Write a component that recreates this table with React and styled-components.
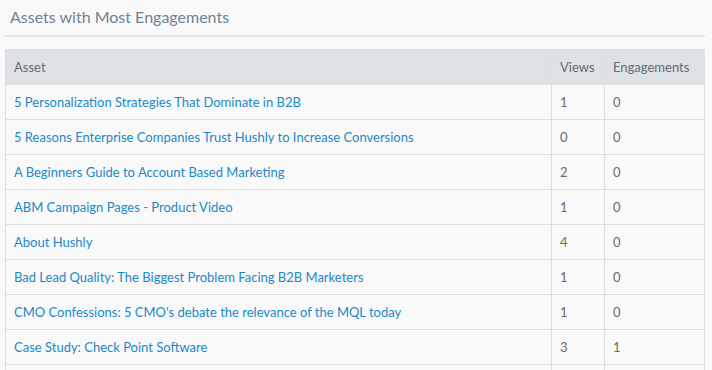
import React from 'react'
import styled, { createGlobalStyle } from 'styled-components'

const GlobalStyle = createGlobalStyle`
  body {
    margin: 0;
    background: #f9f9f9;
    font-family: Lato, 'Open Sans', sans-serif;
  }
`

const assets = [
  { name: '5 Personalization Strategies That Dominate in B2B', views: 1, engagements: 0 },
  { name: '5 Reasons Enterprise Companies Trust Hushly to Increase Conversions', views: 0, engagements: 0 },
  { name: 'A Beginners Guide to Account Based Marketing', views: 2, engagements: 0 },
  { name: 'ABM Campaign Pages - Product Video', views: 1, engagements: 0 },
  { name: 'About Hushly', views: 4, engagements: 0 },
  { name: 'Bad Lead Quality: The Biggest Problem Facing B2B Marketers', views: 1, engagements: 0 },
  { name: "CMO Confessions: 5 CMO's debate the relevance of the MQL today", views: 1, engagements: 0 },
  { name: 'Case Study: Check Point Software', views: 3, engagements: 1 },
  { name: 'Content Experience Platform', views: 2, engagements: 0 },
]

const Panel = styled.section`
  padding: 4px 7px 0 5px;
  height: 370px;
  box-sizing: border-box;
  overflow: hidden;
`

const Title = styled.h3`
  margin: 0 0 12px;
  padding: 2px 5px 7px;
  font-size: 16px;
  line-height: 22px;
  font-weight: 400;
  color: #6f8394;
  border-bottom: 2px solid #e7e7e7;
`

const Table = styled.table`
  width: 100%;
  border-collapse: collapse;
  font-size: 13px;
`

const Head = styled.th`
  background: #dde1e6;
  color: #636b74;
  font-weight: 400;
  text-align: left;
  height: 34px;
  padding: 0 8px;
  border: 1px solid #dcdfe3;
  white-space: nowrap;
  width: ${(p) => p.$width || 'auto'};
`

const Cell = styled.td`
  height: 34px;
  padding: 0 8px;
  border: 1px solid #dedede;
  color: #676a6c;
  white-space: nowrap;
`

const AssetLink = styled.a`
  color: #1c88c7;
  text-decoration: none;
`

export default function App() {
  return (
    <>
      <GlobalStyle />
      <Panel>
        <Title>Assets with Most Engagements</Title>
        <Table>
          <thead>
            <tr>
              <Head>Asset</Head>
              <Head $width="36px">Views</Head>
              <Head $width="83px">Engagements</Head>
            </tr>
          </thead>
          <tbody>
            {assets.map((a) => (
              <tr key={a.name}>
                <Cell>
                  <AssetLink href="#">{a.name}</AssetLink>
                </Cell>
                <Cell>{a.views}</Cell>
                <Cell>{a.engagements}</Cell>
              </tr>
            ))}
          </tbody>
        </Table>
      </Panel>
    </>
  )
}
